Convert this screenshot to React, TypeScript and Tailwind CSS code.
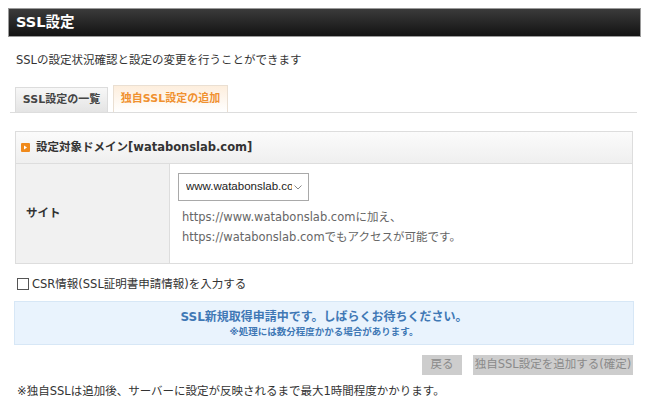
const jp = "font-['DejaVu_Sans','Noto_Sans_CJK_JP',sans-serif]";

function Tabs() {
  return (
    <div className="mt-[17px] ml-[2px] mr-[5px] flex items-end gap-[5px] border-b border-[#dddddd] pl-[5px]">
      <div className="flex h-[25px] w-[93px] items-center justify-center border border-b-0 border-[#dcdcdc] bg-gradient-to-b from-[#f7f7f7] to-[#e4e4e4] text-[11px] font-bold text-[#444]">
        SSL設定の一覧
      </div>
      <div className="flex h-[27px] w-[115px] items-center justify-center border border-b-0 border-[#eadfd2] bg-gradient-to-b from-[#fdeedd] to-[#ffffff] text-[11px] font-bold text-[#f0912f]">
        独自SSL設定の追加
      </div>
    </div>
  );
}

function DomainPanel() {
  return (
    <div className="mt-[18px] ml-[7px] w-[618px] border border-[#dddddd]">
      <div className="flex h-[32px] items-center gap-[6px] border-b border-[#dddddd] bg-gradient-to-b from-[#fbfbfb] to-[#efefef] pl-[5px] text-[11.5px] font-bold text-[#333]">
        <span className="flex h-[9px] w-[9px] items-center justify-center rounded-[1px] bg-[#f08a1c]">
          <svg width="5" height="5" viewBox="0 0 5 5">
            <path d="M1 0.5 L4 2.5 L1 4.5 Z" fill="#fff" />
          </svg>
        </span>
        設定対象ドメイン[watabonslab.com]
      </div>
      <div className="flex h-[99px]">
        <div className="flex w-[154px] items-center border-r border-[#dddddd] bg-[#f1f1f1] pl-[10px] text-[11.5px] font-bold text-[#333]">
          サイト
        </div>
        <div className="flex-1 pl-[8px] pt-[9px]">
          <div className="flex h-[28px] w-[131px] items-center border border-[#a9a9a9] bg-white pl-[7px] pr-[6px]">
            <span className="w-[106px] overflow-hidden whitespace-nowrap font-['Liberation_Sans',sans-serif] text-[11.5px] text-[#222]">
              www.watabonslab.com
            </span>
            <svg className="ml-auto" width="8" height="5" viewBox="0 0 8 5">
              <path d="M0.5 0.5 L4 4 L7.5 0.5" fill="none" stroke="#888" strokeWidth="1" />
            </svg>
          </div>
          <div className="mt-[6px] pl-[4px] text-[11.5px] leading-[20px] text-[#666]">
            <p>https://www.watabonslab.comに加え、</p>
            <p>https://watabonslab.comでもアクセスが可能です。</p>
          </div>
        </div>
      </div>
    </div>
  );
}

export default function App() {
  return (
    <div className={`h-[413px] w-[650px] overflow-hidden bg-white px-[8px] pt-[8px] ${jp}`}>
      <div className="flex h-[29px] w-[633px] items-center border border-[#9a9a9a] bg-gradient-to-b from-[#3b3b3b] to-[#131313] pl-[7px] text-[14.5px] font-bold text-white">
        SSL設定
      </div>

      <p className="mt-[15px] pl-[8px] text-[11.5px] leading-[16px] text-[#333]">
        SSLの設定状況確認と設定の変更を行うことができます
      </p>

      <Tabs />
      <DomainPanel />

      <div className="mt-[13px] flex items-center gap-[3px] pl-[9px] text-[11.5px] leading-[14px] text-[#333]">
        <span className="h-[12px] w-[12px] border border-[#555] bg-white" />
        CSR情報(SSL証明書申請情報)を入力する
      </div>

      <div className="mt-[10px] ml-[6px] flex h-[44px] w-[620px] flex-col items-center justify-center border border-[#d7e7f6] bg-[#e9f3fd]">
        <p className="text-[12px] font-bold leading-[16px] text-[#3f78b5]">
          SSL新規取得申請中です。しばらくお待ちください。
        </p>
        <p className="mt-[1px] text-[9.5px] font-bold leading-[12px] text-[#3f78b5]">
          ※処理には数分程度かかる場合があります。
        </p>
      </div>

      <div className="mt-[10px] mr-[9px] flex justify-end gap-[11px]">
        <div className="flex h-[20px] w-[40px] items-center justify-center bg-[#cdcdcd] text-[11.5px] text-[#8a8a8a]">
          戻る
        </div>
        <div className="flex h-[20px] w-[160px] items-center justify-center bg-[#cdcdcd] text-[11.5px] text-[#8a8a8a]">
          独自SSL設定を追加する(確定)
        </div>
      </div>

      <p className="mt-[8px] pl-[9px] text-[11.5px] leading-[16px] text-[#333]">
        ※独自SSLは追加後、サーバーに設定が反映されるまで最大1時間程度かかります。
      </p>
    </div>
  );
}
